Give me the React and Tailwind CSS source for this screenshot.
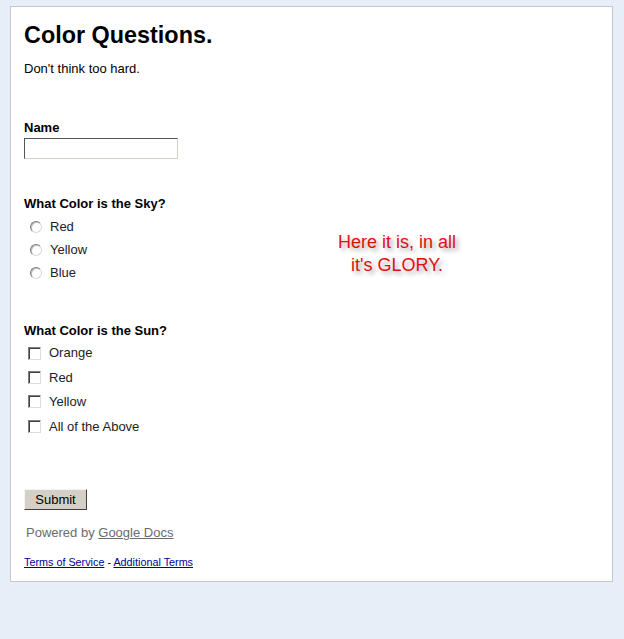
import React from 'react';

const skyOptions = ['Red', 'Yellow', 'Blue'];
const sunOptions = ['Orange', 'Red', 'Yellow', 'All of the Above'];

const Radio = () => (
  <span className="block w-3 h-3 rounded-full bg-white border border-t-[#7a7a7a] border-l-[#7a7a7a] border-b-[#d8d8d8] border-r-[#d8d8d8] shadow-[inset_1px_1px_0_#c0c0c0]" />
);

const Checkbox = () => (
  <span className="block w-[13px] h-[13px] bg-white border border-t-[#808080] border-l-[#808080] border-b-[#dcdcdc] border-r-[#dcdcdc] shadow-[inset_1px_1px_0_#404040]" />
);

const App = () => {
  return (
    <div className="min-h-screen w-full bg-[#e8eef7] pt-[6px] pl-[10px] font-['Liberation_Sans',Arial,sans-serif] text-black">
      <div className="relative w-[603px] bg-white border border-[#c3c8d0] pt-[15px] pl-[13px] pb-[12px]">
        {/* Title and description */}
        <h1 className="text-[23.4px] leading-[26px] font-bold">Color Questions.</h1>
        <p className="mt-[13px] text-[13px] leading-4">Don't think too hard.</p>

        {/* Name field */}
        <div className="mt-[43px]">
          <label className="block text-[13px] leading-4 font-bold">Name</label>
          <input
            type="text"
            className="mt-[2px] block w-[154px] h-[21px] bg-white border border-t-[#555] border-l-[#555] border-b-[#d4d0c8] border-r-[#d4d0c8] outline-none"
          />
        </div>

        {/* Radio question */}
        <div className="mt-[37px]">
          <div className="text-[13px] leading-4 font-bold">What Color is the Sky?</div>
          <div className="mt-[3px]">
            {skyOptions.map((opt) => (
              <div key={opt} className="flex items-center h-[23px] text-[13px] text-[#222]">
                <span className="ml-[6px] mr-[8px]">
                  <Radio />
                </span>
                <span>{opt}</span>
              </div>
            ))}
          </div>
        </div>

        {/* Checkbox question */}
        <div className="mt-[39px]">
          <div className="text-[13px] leading-4 font-bold">What Color is the Sun?</div>
          <div className="mt-[2px]">
            {sunOptions.map((opt) => (
              <div key={opt} className="flex items-center h-[24.4px] text-[13px] text-[#222]">
                <span className="ml-[4px] mr-[8px]">
                  <Checkbox />
                </span>
                <span>{opt}</span>
              </div>
            ))}
          </div>
        </div>

        {/* Submit */}
        <button className="mt-[50.4px] block w-[63px] h-[21px] bg-[#d4d0c8] border border-t-[#f4f4f4] border-l-[#f4f4f4] border-b-[#404040] border-r-[#404040] text-[13px] leading-none text-black">
          Submit
        </button>

        <p className="mt-[15px] ml-[2px] text-[13px] leading-4 text-[#6b6b6b]">
          Powered by <span className="underline">Google Docs</span>
        </p>

        <p className="mt-[15px] text-[10.8px] leading-[13px] text-[#000099]">
          <a className="underline">Terms of Service</a>
          <span className="text-black"> - </span>
          <a className="underline">Additional Terms</a>
        </p>

        {/* Annotation over the form */}
        <div className="absolute top-[224px] left-[306px] w-[160px] text-center text-[18px] leading-[23px] text-[#e01010] [text-shadow:3px_3px_4px_rgba(0,0,0,0.35)]">
          <div>Here it is, in all</div>
          <div>it's GLORY.</div>
        </div>
      </div>
    </div>
  );
};

export default App;
